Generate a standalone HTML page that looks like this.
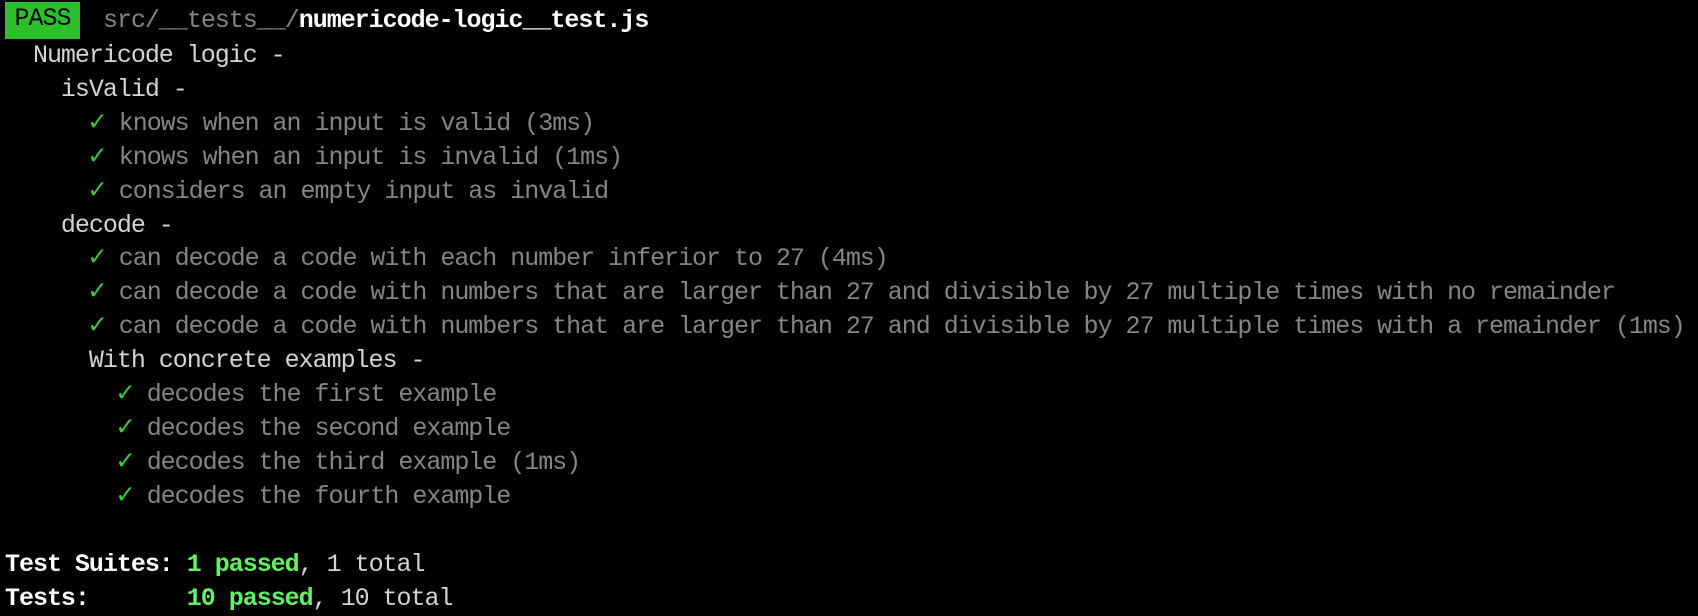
<!DOCTYPE html>
<html><head><meta charset="utf-8"><style>
html,body{margin:0;background:#000;width:1698px;height:616px;overflow:hidden}
pre{margin:0;position:absolute;left:5px;top:4px;font-family:"Liberation Mono","DejaVu Sans Mono",monospace;font-size:25px;letter-spacing:-1.02px;line-height:33.9px;color:#d4d4d4}
.d{color:#858585}.w{color:#fff;font-weight:bold}.c{color:#3cc83c;font-size:28px;line-height:10px}.g{color:#5ef55e;font-weight:bold}
.p{background:#2cbf2c;color:#000;display:inline-block;width:75px;margin-right:9px;text-align:center;height:37px;line-height:33px;margin-top:-2px;vertical-align:top}
</style></head><body><pre><span class="p">PASS</span> <span class="d">src/__tests__/</span><span class="w">numericode-logic__test.js</span>
  Numericode logic -
    isValid -
      <span class="c">✓</span> <span class="d">knows when an input is valid (3ms)</span>
      <span class="c">✓</span> <span class="d">knows when an input is invalid (1ms)</span>
      <span class="c">✓</span> <span class="d">considers an empty input as invalid</span>
    decode -
      <span class="c">✓</span> <span class="d">can decode a code with each number inferior to 27 (4ms)</span>
      <span class="c">✓</span> <span class="d">can decode a code with numbers that are larger than 27 and divisible by 27 multiple times with no remainder</span>
      <span class="c">✓</span> <span class="d">can decode a code with numbers that are larger than 27 and divisible by 27 multiple times with a remainder (1ms)</span>
      With concrete examples -
        <span class="c">✓</span> <span class="d">decodes the first example</span>
        <span class="c">✓</span> <span class="d">decodes the second example</span>
        <span class="c">✓</span> <span class="d">decodes the third example (1ms)</span>
        <span class="c">✓</span> <span class="d">decodes the fourth example</span>

<span class="w">Test Suites:</span> <span class="g">1 passed</span>, 1 total
<span class="w">Tests:</span>       <span class="g">10 passed</span>, 10 total</pre></body></html>
